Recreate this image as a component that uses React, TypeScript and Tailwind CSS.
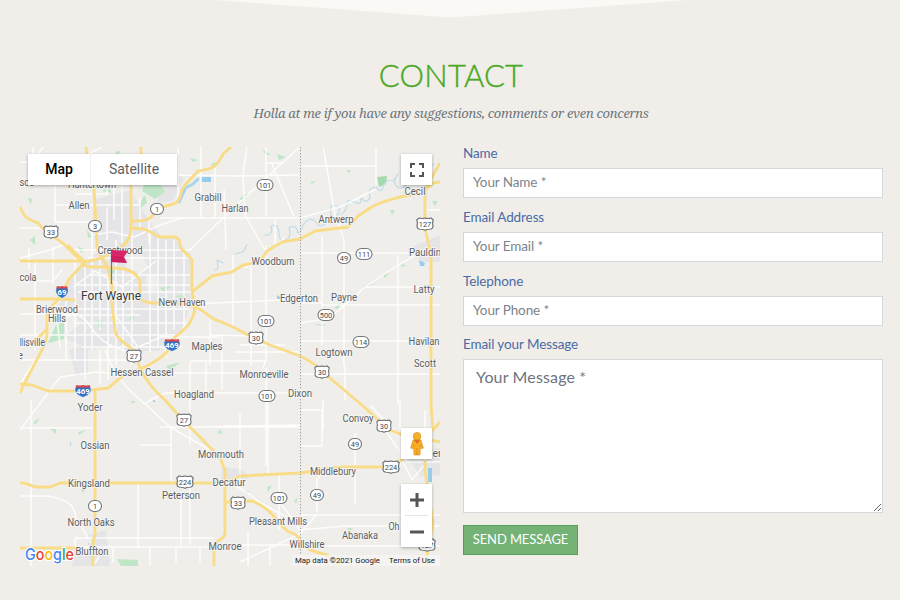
import React from "react";

type Label = [x: number, baseline: number, width: number, text: string];
type Shield = [x: number, y: number, text: string];

const mainRoads = [
  "M141 146V157C141 170 131 175 131 185V228C131 237 126 245 118 249L102 258L85 262L70 278L62 292C61 301 47 306 47 317V335C46 346 38 355 20 393",
  "M86 146C86 160 93 168 93 180L94 190L96 223L97 248C99 257 106 260 108 270L112 285V305L115 330C116 340 126 343 132 349C139 356 136 361 141 370C147 382 153 389 165 400L180 417L200 437L220 458L225 470V533C225 541 214 539 214 547V566",
  "M20 207C24 218 28 219 38 223C46 234 60 240 65 245L80 260Q84 267 91 267H104L125 269Q140 274 140 284V298Q143 302 151 303H178L195 307C206 311 209 318 219 321L233 327L250 336L270 345L300 356C317 363 327 376 337 384L363 406L373 415L386 428L400 434L440 442",
  "M131 228L143 229C154 231 153 237 162 237H174C184 239 177 249 184 251L192 260V290L195 308C192 326 183 330 174 338L167 352C156 363 145 367 138 370C124 373 118 380 108 388L83 391H48L32 385L20 384",
  "M192 292L212 276L232 272L243 265L260 262L267 251L282 242L300 239L315 231L348 227L358 216L367 210C378 202 390 200 400 197L423 192L433 183L440 182",
  "M440 163L432 177L425 187V228L431 255V405L433 430L440 422",
  "M425 460V470L427 483L433 523L427 555V566",
  "M232 146L223 154C216 169 210 169 198 171L185 185C179 191 182 202 173 204L160 208L150 218Q147 221 132 221",
  "M68 245C74 252 78 257 86 262M20 261H80M20 299H61L75 300M33 343L47 329",
  "M95 391V535C92 541 93 550 93 566M20 483C27 482 29 486 37 487H50L60 483H213L230 481L240 476L300 473C320 470 330 467 342 467H390L403 459",
  "M225 502L252 501C261 504 265 508 270 512L283 527C290 535 295 532 298 537L310 550L327 555L340 566M20 548H78",
];

const minorRoads = [
  "M20 162H75L105 145M30 163L45 145M55 184V222H92M55 205H140M75 194H107V188M20 185L50 170M33 146V183M20 228H50M29 248V270M53 246V284",
  "M178 146V200M201 146V217M215 168V217M178 175L238 176L299 175M247 146L243 175L245 215L265 250M224 217L307 140M224 217L190 250M224 190L226 250M266 146V217M160 218H299M272 164L294 217M266 163H282M275 218V246L284 238M299 166L376 166M376 146V185M376 189L340 207L300 218M323 146L335 215L344 240V250M322 236V345M322 305H440M425 210H440M301 253H440M344 250V366M398 255V405M301 341H440M301 374H440M345 366V400M364 287L440 287M301 323L330 318L365 287L398 265L425 250",
  "M20 258L50 250L63 245M35 262V350M20 281H53L62 270M20 314H75M48 315H140M20 335H92M55 300L60 347M66 300V360M75 248V360M85 263V380M92 228V350M100 244V330M108 270V380M116 240V365M123 270V350M132 225V365M150 230V352M158 238V347M166 240V358M174 240V330M184 252V330M75 250H191M88 258H190M90 275H190M75 285H190M78 292H192M75 309H190M75 323H187M75 335H180M82 347H182M72 360H133M20 360H85M73 287L95 271L122 287L156 261M57 320C65 326 66 309 80 316S90 343 130 352M42 350L20 384M112 310L138 347L168 334M107 207V240M114 175V220M122 155V243M140 198V230M149 220V244M92 235L112 232L134 237L160 225L185 217",
  "M20 430L60 377M60 377L96 372L130 375M20 428H93M31 400V566M105 350C115 375 123 386 145 404L170 427L210 450M100 350V384M118 373H157M145 403L165 393H300M160 373H280M190 362V445M206 362V395M190 361H267M251 261V365M233 255V327M210 320V365M222 334V390M257 261L245 268M266 245V360L263 368M266 368V466M160 427H300M190 427L300 425M240 345H285M195 304L300 299M160 337H220M210 335L255 336M140 445H171M171 427V482",
  "M235 352H300M300 303H322M300 410H322V446H301M268 400V473M225 426H297M240 413V485M370 405L400 437L410 444M400 400V466M355 433V505M323 400V430M301 515H440M317 478V512M317 514L300 534L240 562M300 530L345 526H440M279 475V530M290 546H440M278 500L293 520L300 530M236 486L249 494C260 505 279 512 292 520M190 480V545M138 482V548M75 538H214M75 538V550M78 547H214M93 566L105 548M113 548V563M150 548V566M176 548V562M200 548V562M20 496H48C73 501 74 508 76 517L91 543M181 500V546M248 531V566M270 545V566M238 545H298M317 475L320 478M402 460L412 480L424 465M387 433L407 462H440M425 410V465",
];

const labels: Label[] = [
  [27, 186, 15, "sco"], [92, 188, 48, "Huntertown"], [79, 209, 21, "Allen"],
  [208, 201, 27, "Grabill"], [235, 212, 27, "Harlan"], [415, 195, 21, "Cecil"],
  [336, 223, 35, "Antwerp"], [120, 254, 45, "Crestwood"], [425, 256, 32, "Pauldin"],
  [273, 265, 43, "Woodburn"], [28, 281, 17, "cola"], [424, 293, 21, "Latty"],
  [299, 302, 38, "Edgerton"], [344, 301, 26, "Payne"], [182, 306, 47, "New Haven"],
  [57, 313, 42, "Brierwood"], [57, 322, 18, "Hills"], [32, 346, 26, "llisville"],
  [207, 350, 31, "Maples"], [334, 356, 37, "Logtown"], [424, 345, 31, "Havilan"],
  [425, 367, 22, "Scott"], [20, 359, 6, "e"], [142, 376, 63, "Hessen Cassel"], [264, 378, 49, "Monroeville"],
  [300, 397, 24, "Dixon"], [194, 398, 40, "Hoagland"], [90, 411, 25, "Yoder"],
  [358, 422, 31, "Convoy"], [95, 449, 29, "Ossian"], [221, 458, 46, "Monmouth"],
  [333, 475, 46, "Middlebury"], [229, 486, 33, "Decatur"], [89, 487, 42, "Kingsland"],
  [181, 499, 38, "Peterson"], [278, 525, 58, "Pleasant Mills"], [91, 526, 47, "North Oaks"],
  [360, 539, 36, "Abanaka"], [307, 548, 35, "Willshire"], [225, 550, 33, "Monroe"],
  [92, 555, 33, "Bluffton"], [394, 530, 11, "Oh"], [437, 457, 9, "er"],
];

const stateShields: Shield[] = [
  [157, 209, "1"], [95, 226, "3"], [265, 185, "101"], [344, 258, "49"], [364, 254, "111"],
  [326, 315, "500"], [266, 321, "101"], [361, 342, "114"], [267, 396, "101"],
  [355, 444, "49"], [317, 495, "49"], [279, 498, "101"], [95, 506, "1"],
];
const usShields: Shield[] = [
  [51, 232, "33"], [425, 224, "127"], [256, 338, "30"], [322, 372, "30"], [134, 356, "27"],
  [184, 420, "27"], [384, 426, "30"], [391, 467, "224"], [185, 482, "224"], [238, 503, "33"], [427, 545, "127"],
];
const interstates: Shield[] = [[62, 292, "69"], [172, 345, "469"], [83, 391, "469"]];

function StateRoute({ at: [x, y, text] }: { at: Shield }) {
  const w = text.length === 3 ? 16 : 13;
  return (
    <g>
      <rect x={x - w / 2} y={y - 5.5} width={w} height="11" rx="5.5" fill="#fff" stroke="#73777b" strokeWidth="1.1" />
      <text x={x} y={y + 2.7} textAnchor="middle" fontSize="7.4" fill="#43484d">{text}</text>
    </g>
  );
}

function UsRoute({ at: [x, y, text] }: { at: Shield }) {
  const s = text.length === 3 ? 1.14 : 1;
  return (
    <g transform={`translate(${x} ${y})`}>
      <path transform={`scale(${s} 1)`} d="M-5.2-6Q-2.6-5 0-6Q2.6-5 5.2-6L7.2-4Q6 -1 7 2Q7 5 4 5.3Q1.5 5.3 0 6.3Q-1.5 5.3-4 5.3Q-7 5-7 2Q-6-1-7.2-4Z" fill="#fff" stroke="#73777b" strokeWidth="1.1" />
      <text y="2.7" textAnchor="middle" fontSize="7.4" fill="#43484d">{text}</text>
    </g>
  );
}

function Interstate({ at: [x, y, text] }: { at: Shield }) {
  const s = text.length === 3 ? 1.3 : 1;
  return (
    <g transform={`translate(${x} ${y})`}>
      <g transform={`scale(${s} 1)`}>
        <path d="M-5-6Q-2.5-5 0-6Q2.5-5 5-6Q7-2 6 1Q4 5 0 6.5Q-4 5-6 1Q-7-2-5-6Z" fill="#3272c4" stroke="#fff" strokeWidth=".6" />
        <path d="M-5-6Q-2.5-5 0-6Q2.5-5 5-6L5.8-3.5H-5.8Z" fill="#df4545" />
      </g>
      <text y="3.3" textAnchor="middle" fontSize="7.8" fontWeight="700" fill="#fff">{text}</text>
    </g>
  );
}

function MapCanvas() {
  return (
    <svg viewBox="20 147 420 419" className="block h-[419px] w-[420px] font-[Roboto,sans-serif]">
      <rect x="20" y="147" width="420" height="419" fill="#f0eeea" />
      <g fill="#e5e5e8">
        <path d="M93 200L130 190L150 222L162 237L176 240L191 254L193 290L190 308L181 330L160 351L122 351L112 345L90 350L67 339L54 319L66 286L83 263L98 252L92 230Z" />
        <path d="M157 183L177 174L185 178L172 201L158 203Z" />
        <path d="M69 350L88 345V373L76 376Z" />
        <path d="M88 535L106 530L110 566H72L75 551L88 549Z" />
        <path d="M222 467L240 469L251 477L235 486L221 484Z" />
        <path d="M414 246L440 235V262H421Z" />
        <path d="M402 450L440 448V475L421 477Z" />
      </g>
      <g fill="#f0eeea">
        <path d="M130 257L141 254L148 266L139 273L125 267Z" />
        <path d="M146 277L156 273L158 288L148 294Z" />
        <path d="M62 316L75 313L80 324L67 335Z" />
      </g>
      <g fill="#bfe6c7">
        <path d="M56 325L64 323V339L48 343Z" />
        <path d="M146 178L158 180L165 192L155 199L142 191Z" />
        <path d="M377 177L387 176L386 184L379 187Z" fill="#a5d9ae" />
        <path d="M117 559L138 560V566H121Z" />
        <path d="M98 321L102 319V327L98 328Z" />
        <path d="M111 280L105 265L115 270Z" />
        <path d="M142 199L145 195L147 203L139 209Z" />
        <path d="M170 286H171L164 292L160 288Z" />
        <path d="M174 296L186 295L185 299L177 297Z" />
        <path d="M111 160L117 151H120L117 164ZM102 191L109 187L112 193ZM28 197L33 200L30 204ZM30 240L35 236V245ZM78 246L85 250L81 253ZM87 230L92 237L88 238ZM129 318L135 315L132 322ZM119 340H124L122 345Z" />
        <path d="M190 158L198 160L193 162ZM211 164L221 160L213 169ZM262 149L271 155H266ZM277 154L286 157L279 160ZM239 199L248 193L244 201ZM346 170H351L349 173ZM310 182L316 181L312 184ZM390 210H395L392 215ZM432 201H438L435 206Z" />
        <path d="M361 287L378 282L366 287ZM383 275L389 273L385 278ZM402 264L407 266L401 267ZM334 308L342 302L338 309ZM313 324L328 325L321 326ZM33 423L40 417L36 424ZM50 429H56V434ZM78 432L86 430L79 435ZM131 401H136L132 404ZM166 366L180 362L170 371ZM219 429L223 433L218 434ZM81 489L87 487L83 493ZM244 491H250L246 494ZM267 487L272 485L268 492ZM294 500L298 498L296 504ZM347 528H353L350 532Z" />
      </g>
      <g fill="none" stroke="#bfdcea" strokeWidth="1.2" strokeLinecap="round" strokeLinejoin="round">
        <path d="M187 187L193 184L198 179M179 202L185 189" stroke="#a9d4ee" strokeWidth="3" />
        <path d="M265 235Q274 236 271 226Q279 222 279 235Q280 243 286 240Q292 237 289 228Q296 223 298 233Q302 231 303 225Q309 216 315 221Q319 228 323 225Q332 220 331 212Q329 203 337 206Q342 208 337 215Q345 215 347 205Q346 198 354 202Q362 206 361 198Q367 205 370 197Q367 186 377 188Q382 194 383 187Q386 178 393 181L398 174Q391 184 399 188Q407 189 407 181Q412 177 416 182Q421 180 424 169L434 164" />
        <path d="M215 270L218 268L217 260L223 263M247 245L243 252L235 254M168 349L173 344M70 442L71 446" />
      </g>
      <g fill="#98cced">
        <path d="M201 177H211V182H201ZM419 260L425 263L424 266H420ZM428 468H432V482H428ZM277 295L280 297V299H277ZM153 399L156 402H153Z" />
      </g>
      <g fill="none" strokeLinejoin="round">
        {minorRoads.map((d, i) => (
          <path key={i} d={d} stroke="#fff" strokeWidth="1.5" opacity=".85" />
        ))}
        {mainRoads.map((d, i) => (
          <path key={i} d={d} stroke="#f9dc88" strokeWidth="2.9" />
        ))}
        <path d="M300.5 147V555" stroke="#9d9d9d" strokeWidth="1" strokeDasharray="1.3 1.7" />
      </g>
      {interstates.map((s, i) => <Interstate key={i} at={s} />)}
      {usShields.map((s, i) => <UsRoute key={i} at={s} />)}
      {stateShields.map((s, i) => <StateRoute key={i} at={s} />)}
      <g textAnchor="middle" fontSize="10" fill="#5a5e64" stroke="#f7f6f4" strokeWidth="1.8" strokeLinejoin="round" style={{ paintOrder: "stroke" }}>
        {labels.map(([x, y, w, text]) => (
          <text key={text} x={x} y={y} textLength={w} lengthAdjust="spacingAndGlyphs">{text}</text>
        ))}
        <text x="111" y="300" fontSize="12.5" fill="#35383c" textLength="60" lengthAdjust="spacingAndGlyphs">Fort Wayne</text>
      </g>
      <path d="M111.5 251V284" stroke="#77777a" strokeWidth="1.2" />
      <path d="M111 250L128 251L124 257L127 263L111 262Z" fill="#d9256a" />
      <path d="M111 256L124 257L127 263L111 262Z" fill="#b91858" opacity=".4" />
      <text x="25" y="560" fontSize="16" fontWeight="500" fontFamily="Inter, sans-serif" textLength="49" lengthAdjust="spacingAndGlyphs" stroke="#fff" strokeWidth="2" style={{ paintOrder: "stroke" }}>
        <tspan fill="#4285f4">G</tspan><tspan fill="#ea4335">o</tspan><tspan fill="#fbbc04">o</tspan><tspan fill="#4285f4">g</tspan><tspan fill="#34a853">l</tspan><tspan fill="#ea4335">e</tspan>
      </text>
      <path d="M292 555H440V566H292Z" fill="#f7f6f4" opacity=".75" />
      <g fontSize="7.5" fill="#161616">
        <text x="295" y="563" textLength="85" lengthAdjust="spacingAndGlyphs">Map data ©2021 Google</text>
        <text x="389" y="563" textLength="46" lengthAdjust="spacingAndGlyphs">Terms of Use</text>
      </g>
    </svg>
  );
}

function MapPanel() {
  return (
    <section aria-label="Map" className="relative h-[419px] w-[420px] shrink-0">
      <MapCanvas />
      <div className="absolute top-[7px] left-2 flex h-[31px] w-[149px] bg-white pb-px font-[Roboto,sans-serif] text-sm shadow-[0_1px_3px_rgba(0,0,0,0.3)]">
        <button className="w-[63px] border-r border-[#eee] font-medium text-black">Map</button>
        <button className="flex-1 text-[#5e5e5e]">Satellite</button>
      </div>
      <button aria-label="Fullscreen" className="absolute top-[7px] right-2 flex size-[31px] items-center justify-center bg-white shadow-[0_1px_3px_rgba(0,0,0,0.3)]">
        <svg viewBox="0 0 14 14" className="size-3.5" fill="none" stroke="#555" strokeWidth="2">
          <path d="M1 5V1H5M9 1H13V5M13 9V13H9M5 13H1V9" />
        </svg>
      </button>
      <button aria-label="Street view" className="absolute top-[281px] right-2 flex size-[31px] items-center justify-center bg-white shadow-[0_1px_3px_rgba(0,0,0,0.3)]">
        <svg viewBox="0 0 14 24" className="h-6 w-3.5">
          <path d="M3 8Q7 6 11 8L13.3 16L11.5 16.8L10.5 13L10 23H4L3.5 13L2.5 16.8L.7 16Z" fill="#f5ad24" stroke="#da8d18" strokeWidth=".6" />
          <path d="M4 8H10L7 12Z" fill="#e5662d" />
          <path d="M7 16V23" stroke="#d88d1c" strokeWidth=".8" />
          <circle cx="7" cy="4.3" r="3.8" fill="#f7b128" stroke="#d78c22" strokeWidth=".7" />
        </svg>
      </button>
      <div className="absolute top-[337px] right-2 flex h-[63px] w-[31px] flex-col items-center bg-white shadow-[0_1px_3px_rgba(0,0,0,0.3)]">
        <button aria-label="Zoom in" className="flex h-[31px] w-full items-center justify-center">
          <svg viewBox="0 0 14 14" className="size-3.5" stroke="#565656" strokeWidth="3"><path d="M0 7H14M7 0V14" /></svg>
        </button>
        <div className="h-px w-[23px] bg-[#e6e6e6]" />
        <button aria-label="Zoom out" className="flex h-[31px] w-full items-center justify-center">
          <svg viewBox="0 0 14 14" className="size-3.5" stroke="#565656" strokeWidth="3"><path d="M0 7H14" /></svg>
        </button>
      </div>
    </section>
  );
}

function Field({ label, placeholder }: { label: string; placeholder: string }) {
  return (
    <label className="block h-16">
      <span className="block h-[21px] leading-[12px] text-[#496aa5]">{label}</span>
      <input placeholder={placeholder} className="block h-[30px] w-full border border-[#d3d7dc] bg-white px-[9px] pb-[3px] outline-none placeholder:text-[#7c858c]" />
    </label>
  );
}

export default function App() {
  return (
    <main className="h-[600px] w-[900px] overflow-hidden bg-[#f1eee9]">
      <header className="flex h-[147px] flex-col items-center">
        <svg viewBox="0 0 900 18" className="block h-[18px] w-full shrink-0">
          <path d="M215 0H688L451 17.5Z" fill="#faf9f5" />
        </svg>
        <h1 className="mt-[37px] ml-0.5 h-10 font-[Lato,sans-serif] text-[31px] leading-10 font-light tracking-[0.2px] text-[#4ca928] [-webkit-text-stroke:0.4px_#4ca928]">CONTACT</h1>
        <p className="mt-2 ml-0.5 font-['Noto_Serif','DejaVu_Serif_Condensed','DejaVu_Serif',serif] text-[13px] leading-5 tracking-[-0.27px] whitespace-nowrap text-[#6c757d] italic">
          Holla at me if you have any suggestions, comments or even concerns
        </p>
      </header>
      <div className="flex gap-[23px] pl-5">
        <MapPanel />
        <form className="w-[420px] font-[Lato,sans-serif] text-[13.5px] tracking-[-0.1px]" onSubmit={(e) => e.preventDefault()}>
          <Field label="Name" placeholder="Your Name *" />
          <Field label="Email Address" placeholder="Your Email *" />
          <Field label="Telephone" placeholder="Your Phone *" />
          <label className="block">
            <span className="block h-5 leading-[11px] text-[#496aa5]">Email your Message</span>
            <textarea placeholder="Your Message *" className="block h-[154px] w-full resize border border-[#d3d7dc] bg-white px-3 py-[5px] text-base leading-6 tracking-[0.15px] outline-none placeholder:text-[#6c757d]" />
          </label>
          <button className="mt-3 flex h-[30px] w-[115px] items-center justify-center border border-[#559d58] bg-[#74b276] text-[13px] text-white">SEND MESSAGE</button>
        </form>
      </div>
    </main>
  );
}
